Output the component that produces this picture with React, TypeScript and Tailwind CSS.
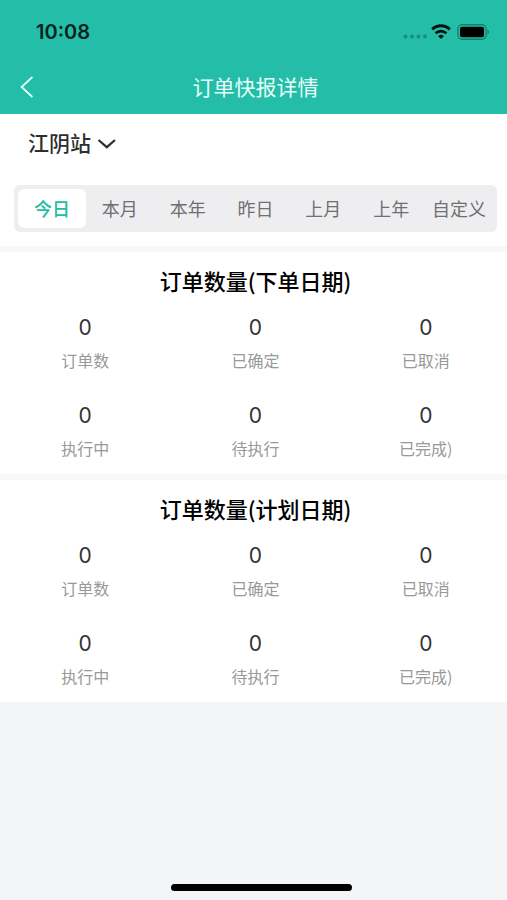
import React, { useState } from "react";

interface Stat {
  label: string;
  value: number;
}

const ranges = ["今日", "本月", "本年", "昨日", "上月", "上年", "自定义"];

const stats: Stat[] = [
  { label: "订单数", value: 0 },
  { label: "已确定", value: 0 },
  { label: "已取消", value: 0 },
  { label: "执行中", value: 0 },
  { label: "待执行", value: 0 },
  { label: "已完成)", value: 0 },
];

const StatusBar: React.FC = () => (
  <div className="flex h-16 items-center justify-between pl-9 pr-[18px]">
    <span className="font-['Inter','Noto_Sans_CJK_SC',sans-serif] text-[20px] font-semibold leading-6 text-[#08231f]">
      10:08
    </span>
    <div className="flex items-center gap-1">
      <svg className="h-4 w-6" viewBox="0 0 24 16" fill="#1a8d7d" aria-hidden="true">
        <circle cx="2.5" cy="12.5" r="2" />
        <circle cx="9" cy="12.5" r="2" />
        <circle cx="15.5" cy="12.5" r="2" />
        <circle cx="22" cy="12.5" r="2" />
      </svg>
      <svg className="h-4 w-5" viewBox="0 0 20 16" fill="none" aria-hidden="true">
        <path d="M1.2 5.4a12.6 12.6 0 0 1 17.6 0" stroke="#04110f" strokeWidth="2.9" />
        <path d="M4.6 9.2a7.8 7.8 0 0 1 10.8 0" stroke="#04110f" strokeWidth="2.7" />
        <path d="M10 15 7.2 12.2a4 4 0 0 1 5.6 0Z" fill="#04110f" />
      </svg>
      <svg className="ml-0.5 h-4 w-8" viewBox="0 0 32 16" aria-hidden="true">
        <rect x="1" y="0.8" width="28" height="14.4" rx="4" fill="none" stroke="#178273" strokeWidth="1.4" />
        <rect x="3" y="2.8" width="24" height="10.4" rx="2" fill="#000" />
        <path d="M30.4 5.5v5c1-.4 1.6-1.4 1.6-2.5s-.6-2.1-1.6-2.5Z" fill="#178273" />
      </svg>
    </div>
  </div>
);

const StatSection: React.FC<{ title: string }> = ({ title }) => (
  <section className="bg-white py-2.5 text-center">
    <h2 className="mb-3.5 text-[22px] font-medium leading-9 text-black">{title}</h2>
    <dl className="grid grid-cols-3 gap-y-6">
      {stats.map((stat) => (
        <div key={stat.label} className="flex flex-col-reverse">
          <dt className="text-base leading-8 text-[#999999]">{stat.label}</dt>
          <dd className="font-['Inter','Noto_Sans_CJK_SC',sans-serif] text-[21px] leading-8 text-[#333333]">
            {stat.value}
          </dd>
        </div>
      ))}
    </dl>
  </section>
);

const App: React.FC = () => {
  const [active, setActive] = useState("今日");

  return (
    <div className="flex min-h-screen flex-col overflow-x-hidden bg-[#f3f5f7] font-['Noto_Sans_CJK_SC',sans-serif]">
      <header className="bg-[#23bda8]">
        <StatusBar />
        <div className="grid h-[50px] grid-cols-[40px_1fr_36px] items-center pb-1.5">
          <button type="button" aria-label="返回" className="flex h-10 items-center pl-5 pt-0.5">
            <svg className="h-6 w-4" viewBox="0 0 16 24" fill="none" stroke="#e3fffb" strokeWidth="1.8" aria-hidden="true">
              <path d="M12.4 2 1.6 12l10.8 10" />
            </svg>
          </button>
          <h1 className="text-center text-[21px] leading-8 text-[#e9fffc]">订单快报详情</h1>
        </div>
      </header>

      <main className="-mr-1 flex flex-col gap-1.5 bg-[#f7f7f8]">
        <div className="bg-white px-3.5 pb-3.5 pt-2.5">
          <div className="relative ml-3.5 inline-flex h-9 items-center">
            <select
              aria-label="站点"
              className="h-9 cursor-pointer appearance-none bg-transparent pr-7 text-[21px] font-medium leading-9 text-[#2e2e2e] outline-none"
            >
              <option>江阴站</option>
            </select>
            <svg
              className="pointer-events-none absolute right-0.5 top-3.5 h-3 w-5"
              viewBox="0 0 20 12"
              fill="none"
              stroke="#2e2e2e"
              strokeWidth="2.2"
              aria-hidden="true"
            >
              <path d="m1.5 2 8.3 7.2L18 2" />
            </svg>
          </div>

          <div className="mt-[25px] flex rounded-md bg-[#eeeef0] p-1">
            {ranges.map((range) => (
              <button
                key={range}
                type="button"
                aria-pressed={active === range}
                onClick={() => setActive(range)}
                className={
                  active === range
                    ? "h-[39px] flex-1 basis-0 rounded-md bg-white pb-0.5 text-lg font-medium text-[#23bda0]"
                    : "h-[39px] flex-1 basis-0 rounded-md pb-0.5 text-lg text-[#707070]"
                }
              >
                {range}
              </button>
            ))}
          </div>
        </div>

        <StatSection title="订单数量(下单日期)" />
        <StatSection title="订单数量(计划日期)" />
      </main>

      <div className="mt-auto flex justify-center pb-[9px] pl-4">
        <div className="h-[7px] w-[181px] rounded-full bg-black" />
      </div>
    </div>
  );
};

export default App;
